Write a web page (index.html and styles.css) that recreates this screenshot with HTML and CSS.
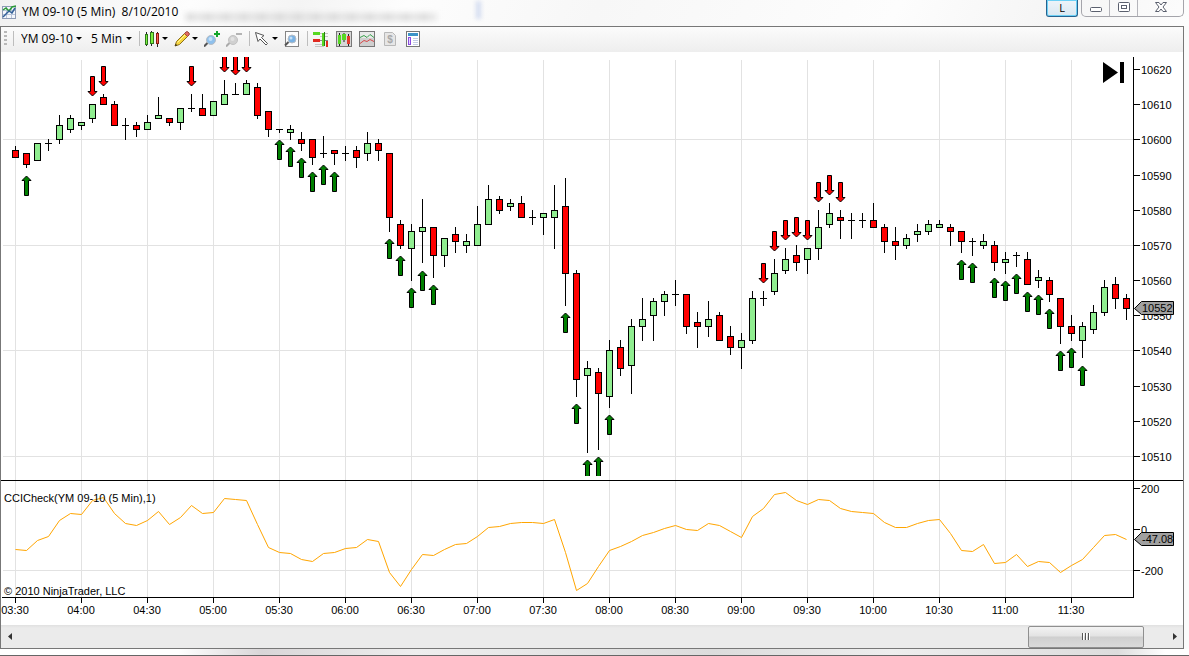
FILE: index.html
```html
<!DOCTYPE html>
<html lang="en">
<head>
    <meta charset="UTF-8">
    <meta name="viewport" content="width=device-width, initial-scale=1.0">
    <title>YM 09-10 (5 Min) 8/10/2010</title>
    <link rel="stylesheet" href="styles.css">
</head>
<body>
    <header class="title-bar">
        <svg class="title-icon" viewBox="0 0 14 14" width="14" height="14" aria-hidden="true">
            <rect x="0.5" y="1.5" width="13" height="12" fill="#f4f7fc" stroke="#8d9bb5"/>
            <path d="M1 5.500h12M1 9.500h12M4.500 2v11M9.500 2v11" stroke="#b9c5da"/>
            <path d="M1 5l3-2 3 3 3-4 4-1" fill="none" stroke="#2a9a35" stroke-width="1.500"/>
            <path d="M1 12l3-3 3-3 3 2 3-5" fill="none" stroke="#315f98" stroke-width="1.500"/>
        </svg>
        <h1 class="title">YM 09-10 (5 Min)&nbsp; 8/10/2010</h1>
        <div class="glass-smudge"></div>
        <div class="glass-spot"></div>
        <div class="window-buttons">
            <button class="link-button" type="button">L</button>
            <div class="window-controls">
                <button type="button" aria-label="Minimize">
                    <svg viewBox="0 0 12 12" width="12" height="12"><rect x="0.5" y="6.500" width="11" height="4" rx="1" fill="#fff" stroke="#5b606e"/></svg>
                </button>
                <button type="button" aria-label="Maximize">
                    <svg viewBox="0 0 12 12" width="12" height="12"><rect x="0.5" y="1.500" width="11" height="9" rx="1" fill="#fff" stroke="#5b606e"/><rect x="3.500" y="4.500" width="5" height="3" fill="#fff" stroke="#5b606e"/></svg>
                </button>
                <button class="close" type="button" aria-label="Close">
                    <svg viewBox="0 0 12 12" width="12" height="12"><path d="M.5 1.500h3.500l2 2.500 2-2.500h3.500l-3.500 4.500 3.500 4.500h-3.500l-2-2.500-2 2.500h-3.500l3.500-4.500z" fill="#fff" stroke="#5b606e"/></svg>
                </button>
            </div>
        </div>
    </header>

    <main class="frame">
        <div class="toolbar">
            <span class="grip"></span>
            <span class="separator"></span>
            <label class="dropdown instrument">
                <select aria-label="Instrument"><option>YM 09-10</option></select>
            </label>
            <label class="dropdown interval">
                <select aria-label="Interval"><option>5 Min</option></select>
            </label>
            <span class="separator"></span>
            <button class="tool has-menu" type="button" aria-label="Chart style">
                <svg viewBox="0 0 16 16" width="16" height="16">
                    <path d="M2.500 1v14M7.500 0v15M13.500 1v15" stroke="#222"/>
                    <rect x="1.500" y="3.500" width="2" height="10" fill="#7cf03e" stroke="#2f7a1c"/>
                    <rect x="6.500" y="1.500" width="3" height="11" fill="#7cf03e" stroke="#2f7a1c"/>
                    <rect x="12.500" y="2.500" width="2" height="10" fill="#f8604e" stroke="#8c1c12"/>
                </svg>
            </button>
            <button class="tool has-menu" type="button" aria-label="Drawing tools">
                <svg viewBox="0 0 16 16" width="16" height="16">
                    <path d="M1 15l1.500-4.500 8-8 3 3-8 8z" fill="#f7d63c" stroke="#8c6f1c"/>
                    <path d="M3.500 11.500l8-8" stroke="#fff3a0"/>
                    <path d="M10.500 2.500l1.500-1.500q1-.8 2 0l1 1q.8 1 0 2l-1.500 1.500z" fill="#e46a62" stroke="#9a4a40"/>
                    <path d="M1 15l.8-2.200 1.400 1.400z" fill="#222"/>
                </svg>
            </button>
            <button class="tool" type="button" aria-label="Zoom in">
                <svg viewBox="0 0 16 16" width="16" height="16">
                    <path d="M0 15.500l4-4" stroke="#555" stroke-width="2"/>
                    <circle cx="7" cy="9" r="4.500" fill="#8ec0ec" stroke="#b6bcc4"/>
                    <circle cx="6.500" cy="8" r="2" fill="#c4e0f8"/>
                    <path d="M10 3h6M13 0v6" stroke="#12a52a" stroke-width="2"/>
                </svg>
            </button>
            <button class="tool" type="button" aria-label="Zoom out">
                <svg viewBox="0 0 16 16" width="16" height="16">
                    <path d="M0 15.500l4-4" stroke="#aaa" stroke-width="2"/>
                    <circle cx="7" cy="9" r="4.500" fill="#d0d0d0" stroke="#c2c2c2"/>
                    <circle cx="6.500" cy="8" r="2" fill="#e2e2e2"/>
                    <path d="M10 3h6" stroke="#b4b4b4" stroke-width="2"/>
                </svg>
            </button>
            <span class="separator"></span>
            <button class="tool has-menu" type="button" aria-label="Cursor">
                <svg viewBox="0 0 16 16" width="16" height="16">
                    <path d="M1.500 1.500l8.500 3-2.500 2 6 6-1.500 1.500-6-6-2 2.500z" fill="#fff" stroke="#555"/>
                </svg>
            </button>
            <button class="tool" type="button" aria-label="Data box">
                <svg viewBox="0 0 16 16" width="16" height="16">
                    <rect x="1.500" y="0.500" width="13" height="15" fill="#fdfdfd" stroke="#858585"/>
                    <path d="M1 14.500l3.500-3.500" stroke="#555" stroke-width="2"/>
                    <circle cx="8" cy="8" r="4" fill="#79b2e4" stroke="#b6bcc4"/>
                    <circle cx="7" cy="7" r="1.500" fill="#c4e0f8"/>
                </svg>
            </button>
            <span class="separator"></span>
            <div class="panel-tools">
                <button class="tool" type="button" aria-label="Chart trader">
                    <svg viewBox="0 0 16 16" width="16" height="16">
                        <path d="M7 2.500h8M7 5.500h8M2 13.500h9M2 15.500h9" stroke="#c4c4c4"/>
                        <rect x="0" y="1" width="7" height="3" fill="#57d823"/>
                        <rect x="0" y="8" width="7" height="3" fill="#e02a20"/>
                        <path d="M7 9.500h8" stroke="#888"/>
                        <rect x="9" y="2" width="3" height="13" fill="#57d823"/>
                        <path d="M11.500 1v14" stroke="#257a10"/>
                        <rect x="13" y="10" width="2" height="6" fill="#e02a20"/>
                    </svg>
                </button>
                <button class="tool" type="button" aria-label="Data series">
                    <svg viewBox="0 0 16 16" width="16" height="16">
                        <rect x="0.500" y="0.500" width="15" height="15" fill="#d6d6d6" stroke="#777"/>
                        <path d="M3.500 2v13M8 2v9M12.500 3v12" stroke="#222"/>
                        <rect x="2" y="4" width="3" height="9" fill="#57d823"/>
                        <rect x="6" y="3" width="4" height="6" fill="#57d823"/>
                        <rect x="11" y="5" width="3" height="8" fill="#e33a2c"/>
                    </svg>
                </button>
                <button class="tool" type="button" aria-label="Indicators">
                    <svg viewBox="0 0 16 16" width="16" height="16">
                        <rect x="0.500" y="0.500" width="15" height="15" fill="#cfcfcf" stroke="#777"/>
                        <rect x="1" y="1" width="14" height="6" fill="#e9e9e9"/>
                        <path d="M1 6.500l4-2 3 2 3-3 4 3" fill="none" stroke="#38a04c"/>
                        <path d="M1 12.500l4-3 3 1 3-2 4 2" fill="none" stroke="#d8484a"/>
                    </svg>
                </button>
                <button class="tool" type="button" aria-label="Strategies">
                    <svg viewBox="0 0 16 16" width="16" height="16">
                        <path d="M2.500 1.500h8l3 3v10h-11z" fill="#e6e6e6" stroke="#b8b8b8"/>
                        <text class="dollar" x="8" y="12" text-anchor="middle">$</text>
                    </svg>
                </button>
                <button class="tool" type="button" aria-label="Properties">
                    <svg viewBox="0 0 16 16" width="16" height="16">
                        <rect x="1.500" y="0.500" width="13" height="15" fill="#fff" stroke="#777"/>
                        <rect x="3" y="2" width="10" height="3" fill="#3d94c8"/>
                        <rect x="3.500" y="6.500" width="2" height="7" fill="#e4d4ff" stroke="#8a4be0"/>
                        <path d="M8 7.500h5M8 9.500h5M8 11.500h5M8 13.500h5" stroke="#c3cbe6"/>
                    </svg>
                </button>
            </div>
        </div>

        <svg class="chart" id="chart" viewBox="1 52 1182 573" role="img" aria-label="YM 09-10 price chart with CCI indicator">
            <defs>
                <clipPath id="price-clip"><rect x="1" y="57" width="1132" height="419"/></clipPath>
                <path id="arrow-up" d="M0 .5l4.500 4.500h-2.500v15h-4v-15h-2.500z"/>
                <path id="arrow-down" d="M0 20.500l-4.500-4.500h2.500v-15h4v15h2.500z"/>
            </defs>
            <g id="grid" class="grid"></g>
            <polyline id="cci" class="cci"/>
            <g id="candles" class="candles" clip-path="url(#price-clip)"></g>
            <g id="arrows" clip-path="url(#price-clip)"></g>
            <g id="axes" class="axes">
                <rect x="1133" y="57" width="1" height="541"/>
                <rect x="1" y="480" width="1182" height="1"/>
                <rect x="2" y="597" width="1132" height="1"/>
            </g>
            <g id="labels" class="labels">
                <text x="4" y="502">CCICheck(YM 09-10 (5 Min),1)</text>
                <text x="4" y="595">© 2010 NinjaTrader, LLC</text>
            </g>
            <path class="tag" d="M1134.500 308.500l7-7h32v13h-32z"/>
            <path class="tag" d="M1134.500 539.500l7-7h32v13h-32z"/>
            <g class="labels">
                <text x="1142" y="312">10552</text>
                <text x="1142" y="543">-47.08</text>
            </g>
            <path d="M1103 62l15 10.500-15 10.500zM1120 62h4v21h-4z"/>
        </svg>

        <div class="scrollbar">
            <button type="button" aria-label="Scroll left"><svg viewBox="0 0 4 7" width="4" height="7"><path d="M4 0v7l-4-3.500z" fill="#333"/></svg></button>
            <input type="range" min="0" max="1000" value="979" aria-label="Chart position">
            <button type="button" aria-label="Scroll right"><svg viewBox="0 0 4 7" width="4" height="7"><path d="M0 0v7l4-3.500z" fill="#333"/></svg></button>
        </div>
    </main>
    <div class="window-edge"></div>

    <script src="chart.js"></script>
</body>
</html>
```
FILE: styles.css
```css
* {
    box-sizing: border-box;
}
body {
    margin: 0;
    min-height: 100vh;
    background-color: #fbfbfb;
    font-family: 'Open Sans', 'Noto Sans', sans-serif;
    font-size: 12px;
    color: #000;
}
button,
select {
    margin: 0;
    padding: 0;
    border: none;
    background: none;
    font: inherit;
    color: inherit;
}
svg {
    display: block;
}

/* Title bar */
.title-bar {
    display: flex;
    align-items: flex-start;
    height: 26px;
    padding: 0 5px 0 2px;
    background: linear-gradient(115deg, #f1f1f1 0%, #fdfdfd 16%, #f4f4f4 25%, #fdfdfd 34%, #f7f7f7 50%, #fdfdfd 75%, #f5f5f5 88%, #fdfdfd 100%);
}
.title-icon {
    margin-top: 5px;
}
.title {
    margin: 0 0 0 6px;
    font-size: 12px;
    font-weight: normal;
    line-height: 24px;
    white-space: nowrap;
}
.glass-smudge {
    width: 250px;
    height: 6px;
    margin: 14px 0 0 8px;
    background: repeating-linear-gradient(90deg, #d0d0d0 0, #d0d0d0 7px, #e6e6e6 9px, #d6d6d6 15px, #ececec 18px);
    filter: blur(3px);
}
.glass-spot {
    width: 5px;
    height: 18px;
    margin: 1px 0 0 40px;
    background-color: #d3dcf0;
    filter: blur(2px);
}
.window-buttons {
    display: flex;
    gap: 3px;
    height: 17px;
    margin-left: auto;
}
.link-button {
    width: 32px;
    border: 1px solid #26628f;
    border-top: none;
    border-radius: 0 0 3px 3px;
    background: linear-gradient(#eef4f9, #d9e8f2);
    box-shadow: inset 0 0 0 1px #6cd0f5;
    font-size: 11px;
    line-height: 14px;
}
.window-controls {
    display: flex;
    border: 1px solid #a5a5ab;
    border-top: none;
    border-radius: 0 0 5px 5px;
}
.window-controls button {
    display: flex;
    justify-content: center;
    width: 28px;
    padding-top: 1px;
    border-right: 1px solid #b5b5bb;
}
.window-controls .close {
    width: 45px;
    border-right: none;
}

/* Chart window */
.frame {
    margin-right: 5px;
    border: 1px solid #777;
    background-color: #fff;
}
.toolbar {
    display: flex;
    align-items: center;
    height: 25px;
    padding: 0 0 2px 3px;
    background: linear-gradient(#fbfbfb, #eee);
}
.grip {
    width: 3px;
    height: 15px;
    margin-right: 5px;
    background: repeating-linear-gradient(#b8b8b8 0, #b8b8b8 2px, transparent 2px, transparent 4px);
}
.separator {
    width: 1px;
    height: 15px;
    margin: 0 4px 0 1px;
    background-color: #bdbdbd;
}
.dropdown {
    display: flex;
    align-items: center;
    margin-right: 6px;
}
.dropdown select {
    appearance: none;
    padding-left: 3px;
    line-height: 20px;
    outline: none;
}
.instrument select {
    width: 58px;
}
.interval select {
    width: 38px;
}
.dropdown::after,
.has-menu::after {
    content: "";
    border: 3px solid transparent;
    border-top-color: #000;
    border-bottom: none;
}
.tool {
    display: flex;
    align-items: center;
    gap: 2px;
    margin-right: 6px;
}
.panel-tools {
    display: flex;
    gap: 7px;
    padding-left: 1px;
}
.panel-tools .tool {
    margin-right: 0;
}
.dollar {
    font: bold 10px 'Liberation Sans', sans-serif;
    fill: #a8a8a8;
}

/* Chart */
.chart {
    width: 100%;
    height: auto;
}
.grid,
.candles,
.axes {
    shape-rendering: crispEdges;
}
.grid {
    fill: #e2e2e2;
}
.up {
    fill: #90ee90;
}
.down {
    fill: #f00;
}
.cci {
    fill: none;
    stroke: #ffa500;
}
.labels {
    font-family: 'Liberation Sans', Arial, sans-serif;
    font-size: 11px;
}
.time {
    text-anchor: middle;
}
.arrow-up {
    fill: #008000;
    stroke: #000;
}
.arrow-down {
    fill: #f00;
    stroke: #000;
}
.tag {
    fill: #a0a0a0;
    stroke: #000;
}

/* Scrollbar */
.scrollbar {
    display: flex;
    height: 23px;
    background: linear-gradient(#e0e0e0, #ebebeb 3px);
}
.scrollbar button {
    display: flex;
    align-items: center;
    justify-content: center;
    width: 17px;
}
.scrollbar input {
    flex: 1;
    min-width: 0;
    height: 23px;
    margin: 0;
    appearance: none;
    background: none;
}
.scrollbar input::-webkit-slider-thumb {
    appearance: none;
    width: 116px;
    height: 22px;
    border: 1px solid #8f8f8f;
    border-radius: 2px;
    background:
        repeating-linear-gradient(90deg, #555 0, #555 1px, #fff 1px, #fff 2px, transparent 2px, transparent 3px) center / 9px 7px no-repeat,
        linear-gradient(#f3f3f3, #e3e3e3 45%, #cfcfcf 50%, #dadada);
}
.window-edge {
    height: 7px;
    border-bottom: 1px solid #666;
    background: linear-gradient(90deg, #fff 15%, #d9d6d8 22%, #eee 35%, #dcdcdc 60%, #eee 75%, #ddd 94%, #fff 98%);
}
```
FILE: chart.js
```javascript
const SVG_NS = 'http://www.w3.org/2000/svg';
const FIRST_BAR = 15;
const BAR_STEP = 11;

// high, body top, body bottom, low, direction (u = up, d = down, n = unchanged)
const bars = [
    [146, 150, 158, 158, 'd'], [153, 153, 165, 168, 'd'], [143, 143, 161, 161, 'u'], [139, 143, 144, 151, 'n'],
    [115, 125, 140, 144, 'u'], [115, 118, 130, 133, 'u'], [122, 122, 126, 130, 'u'], [104, 104, 119, 123, 'u'],
    [94, 97, 105, 105, 'd'], [101, 104, 126, 126, 'd'], [118, 125, 126, 140, 'n'], [122, 125, 130, 137, 'd'],
    [115, 122, 130, 130, 'u'], [97, 115, 119, 119, 'u'], [118, 118, 123, 126, 'd'], [108, 108, 123, 130, 'u'],
    [94, 108, 109, 112, 'n'], [94, 108, 116, 116, 'd'], [101, 101, 116, 116, 'u'], [80, 94, 105, 105, 'u'],
    [83, 94, 95, 95, 'n'], [80, 83, 95, 95, 'u'], [83, 87, 116, 119, 'd'], [111, 111, 130, 137, 'd'],
    [129, 129, 130, 133, 'n'], [125, 129, 133, 140, 'u'], [132, 139, 144, 151, 'd'], [139, 139, 158, 165, 'd'],
    [136, 153, 154, 158, 'n'], [150, 150, 154, 165, 'd'], [146, 153, 154, 161, 'n'], [146, 150, 158, 168, 'd'],
    [132, 143, 154, 161, 'u'], [139, 143, 151, 161, 'd'], [153, 153, 218, 232, 'd'], [220, 224, 246, 249, 'd'],
    [224, 231, 249, 281, 'u'], [199, 227, 232, 263, 'u'], [227, 227, 256, 278, 'd'], [238, 238, 256, 267, 'u'],
    [227, 234, 242, 253, 'd'], [234, 241, 246, 253, 'u'], [206, 224, 246, 246, 'u'], [185, 199, 225, 225, 'u'],
    [196, 199, 211, 214, 'd'], [199, 203, 207, 211, 'u'], [196, 203, 218, 218, 'd'], [210, 217, 218, 225, 'n'],
    [213, 213, 218, 235, 'u'], [185, 210, 218, 249, 'u'], [178, 206, 274, 306, 'd'], [270, 273, 380, 397, 'd'],
    [361, 368, 376, 453, 'u'], [368, 372, 394, 450, 'd'], [340, 350, 397, 408, 'u'], [340, 347, 369, 376, 'd'],
    [319, 326, 366, 394, 'u'], [298, 319, 327, 341, 'u'], [298, 301, 316, 341, 'u'], [291, 294, 302, 316, 'u'],
    [280, 294, 295, 306, 'n'], [294, 294, 327, 334, 'd'], [312, 322, 327, 348, 'd'], [301, 319, 327, 337, 'u'],
    [312, 315, 341, 341, 'd'], [326, 336, 348, 355, 'd'], [333, 340, 348, 369, 'u'], [291, 298, 341, 344, 'u'],
    [291, 298, 299, 306, 'n'], [259, 273, 292, 295, 'u'], [248, 259, 271, 274, 'u'], [245, 255, 263, 271, 'd'],
    [248, 248, 260, 274, 'u'], [210, 227, 249, 260, 'u'], [203, 213, 225, 228, 'u'], [210, 217, 221, 239, 'd'],
    [213, 220, 221, 239, 'n'], [213, 220, 221, 228, 'n'], [203, 220, 228, 228, 'd'], [224, 227, 242, 253, 'd'],
    [227, 241, 246, 260, 'd'], [234, 238, 246, 249, 'u'], [224, 231, 235, 242, 'u'], [220, 224, 232, 235, 'u'],
    [220, 224, 228, 228, 'u'], [224, 227, 232, 246, 'd'], [231, 231, 242, 253, 'd'], [238, 241, 242, 256, 'n'],
    [234, 241, 246, 249, 'u'], [241, 245, 263, 271, 'd'], [252, 259, 263, 274, 'u'], [252, 255, 256, 267, 'n'],
    [252, 259, 285, 285, 'd'], [270, 277, 281, 288, 'u'], [277, 280, 295, 302, 'd'], [298, 298, 327, 344, 'd'],
    [315, 326, 334, 341, 'd'], [322, 326, 341, 358, 'u'], [305, 312, 330, 334, 'u'], [280, 287, 313, 316, 'u'],
    [277, 284, 299, 309, 'd'], [294, 298, 309, 320, 'd']
];

const cci = [
    549, 550, 540, 536, 520, 513, 514, 500, 497, 513, 523, 525, 520, 511, 524, 517, 505,
    513, 512, 498, 499, 500, 524, 547, 552, 553, 559, 561, 553, 552, 548, 547, 539, 541,
    572, 586, 569, 554, 555, 549, 544, 543, 536, 527, 526, 523, 522, 522, 523, 519, 552,
    590, 583, 566, 550, 546, 541, 535, 532, 528, 525, 529, 530, 523, 525, 531, 537, 516,
    508, 494, 492, 500, 504, 499, 500, 508, 511, 512, 513, 522, 527, 527, 523, 520, 519,
    533, 550, 551, 544, 563, 562, 554, 566, 561, 562, 572, 565, 559, 547, 535, 534, 539
];

// bar index, top of the arrow
const sellArrows = [
    [7, 76], [8, 66], [16, 66], [19, 52], [20, 55], [21, 52], [68, 263], [69, 231],
    [70, 220], [71, 217], [72, 220], [73, 182], [74, 175], [75, 182]
];
const buyArrows = [
    [1, 175], [24, 139], [25, 146], [26, 157], [27, 171], [28, 164], [29, 171],
    [34, 238], [35, 255], [36, 287], [37, 270], [38, 284], [50, 312], [51, 403],
    [52, 459], [53, 456], [54, 414], [86, 259], [87, 262], [89, 277], [90, 280],
    [91, 273], [92, 291], [93, 294], [94, 308], [95, 350], [96, 347], [97, 365]
];

const scale = [
    ['10620', 69], ['10610', 104], ['10600', 139], ['10590', 175], ['10580', 210], ['10570', 245],
    ['10560', 280], ['10550', 315], ['10540', 350], ['10530', 386], ['10520', 421], ['10510', 456],
    ['200', 488], ['0', 529], ['-200', 570]
];
const times = [
    '03:30', '04:00', '04:30', '05:00', '05:30', '06:00', '06:30', '07:00', '07:30',
    '08:00', '08:30', '09:00', '09:30', '10:00', '10:30', '11:00', '11:30'
];

function add(parentId, tag, attrs, text) {
    const el = document.createElementNS(SVG_NS, tag);
    for (const name in attrs) {
        el.setAttribute(name, attrs[name]);
    }
    if (text) {
        el.textContent = text;
    }
    document.getElementById(parentId).appendChild(el);
}

function rect(parentId, x, y, width, height, cls) {
    add(parentId, 'rect', { x, y, width, height, class: cls || '' });
}

function barX(i) {
    return FIRST_BAR + i * BAR_STEP;
}

// Grid, ticks and labels
[139, 245, 350, 456, 570].forEach(y => rect('grid', 3, y, 1130, 1));
times.forEach((time, i) => {
    const x = barX(i * 6);
    rect('grid', x, 60, 1, 537);
    rect('axes', x, 598, 1, 5);
    add('labels', 'text', { x, y: 614, class: 'time' }, time);
});
scale.forEach(([label, y]) => {
    rect('axes', 1134, y, 6, 1);
    add('labels', 'text', { x: 1141, y: y + 5 }, label);
});

// Candles
bars.forEach(([high, top, bottom, low, dir], i) => {
    const x = barX(i);
    rect('candles', x, high, 1, low - high);
    rect('candles', x - 3, top, 7, bottom - top);
    if (dir !== 'n') {
        rect('candles', x - 2, top + 1, 5, bottom - top - 2, dir === 'u' ? 'up' : 'down');
    }
});

// Signals
sellArrows.forEach(([i, y]) => {
    add('arrows', 'use', { href: '#arrow-down', x: barX(i) + 0.5, y: y - 0.5, class: 'arrow-down' });
});
buyArrows.forEach(([i, y]) => {
    add('arrows', 'use', { href: '#arrow-up', x: barX(i) + 0.5, y: y + 0.5, class: 'arrow-up' });
});

document.getElementById('cci').setAttribute('points', cci.map((y, i) => `${barX(i) + 0.5},${y + 0.5}`).join(' '));
```
